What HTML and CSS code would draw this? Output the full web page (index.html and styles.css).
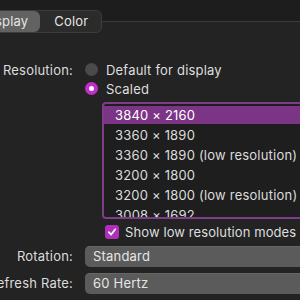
FILE: index.html
```html
<!DOCTYPE html>
<html>
<head>
<meta charset="utf-8">
<link rel="stylesheet" href="styles.css">
</head>
<body>
<div class="window">
  <div class="topbar">
    <div class="segmented">
      <div class="seg seg-on">Display</div>
      <div class="seg">Color</div>
    </div>
  </div>
  <div class="content">
    <div class="form">
      <div class="label lbl-res">Resolution:</div>
      <div class="res">
        <div class="radio-row">
          <span class="radio"></span><span>Default for display</span>
        </div>
        <div class="radio-row">
          <span class="radio radio-on"></span><span>Scaled</span>
        </div>
        <div class="listbox">
          <div class="item item-sel">3840 × 2160</div>
          <div class="item">3360 × 1890</div>
          <div class="item">3360 × 1890 (low resolution)</div>
          <div class="item">3200 × 1800</div>
          <div class="item">3200 × 1800 (low resolution)</div>
          <div class="item">3008 × 1692</div>
          <div class="item">3008 × 1692 (low resolution)</div>
        </div>
        <div class="check-row">
          <span class="checkbox"><svg width="10" height="10" viewBox="0 0 10 10"><path d="M1.8 5.2 L4.1 7.6 L8.3 2.2" fill="none" stroke="#fff" stroke-width="1.7" stroke-linecap="round" stroke-linejoin="round"/></svg></span>
          <span class="check-label">Show low resolution modes</span>
        </div>
      </div>
      <div class="label lbl-pop">Rotation:</div>
      <div class="popup">Standard</div>
      <div class="label lbl-pop">Refresh Rate:</div>
      <div class="popup">60 Hertz</div>
    </div>
  </div>
</div>
</body>
</html>
```

FILE: styles.css
```css
html, body {
  margin: 0;
  padding: 0;
  background: #232323;
  overflow: hidden;
}
body {
  width: 300px;
  height: 300px;
  font-family: "Inter", "Noto Sans", sans-serif;
  font-size: 13px;
  letter-spacing: 0.2px;
  color: #dedede;
}
.window {
  width: 300px;
  height: 300px;
  overflow: hidden;
}
.topbar {
  height: 21px;
  background: #1d1d1d;
  border-bottom: 1px solid #3b3b3b;
  position: relative;
}
.segmented {
  position: absolute;
  left: -31px;
  top: 10px;
  height: 21px;
  display: flex;
  background: #2b2b2b;
  border: 1px solid #3c3c3c;
  border-radius: 6px;
}
.seg {
  height: 21px;
  line-height: 21px;
  border-radius: 6px;
  color: #e4e4e4;
}
.seg-on {
  background: #626262;
  padding: 0 12px 0 12px;
}
.seg:last-child {
  padding: 0 13px 0 14px;
}
.content {
  padding-top: 38px;
}
.form {
  display: grid;
  grid-template-columns: 120px 1fr;
  column-gap: 12px;
  margin-left: -47px;
  row-gap: 6px;
  width: 700px;
}
.label {
  text-align: right;
  color: #dcdcdc;
  white-space: nowrap;
}
.lbl-res {
  line-height: 19px;
  margin-top: 1px;
}
.lbl-pop {
  line-height: 21px;
}
.res {
  display: flex;
  flex-direction: column;
}
.radio-row {
  display: flex;
  align-items: center;
  gap: 8px;
  height: 19px;
  white-space: nowrap;
}
.radio {
  width: 13px;
  height: 13px;
  border-radius: 50%;
  background: #4a4a4a;
  position: relative;
  flex: none;
}
.radio-on {
  background: #c02fca;
}
.radio-on::after {
  content: "";
  position: absolute;
  left: 4px;
  top: 4px;
  width: 5px;
  height: 5px;
  border-radius: 50%;
  background: #fff;
}
.listbox {
  margin-top: 4px;
  margin-left: 17px;
  height: 111px;
  overflow: hidden;
  border: 2px solid #7e3d88;
  border-radius: 4px;
  background: #1e1e1e;
  padding: 2px 0 0 0;
}
.item {
  height: 20px;
  line-height: 19px;
  padding-left: 11px;
  white-space: nowrap;
  color: #dcdcdc;
}
.item-sel {
  background: #7b3486;
  color: #fff;
  height: 18px;
  line-height: 18px;
  margin-bottom: 2px;
}
.check-row {
  display: flex;
  align-items: center;
  gap: 6px;
  margin-top: 5px;
  margin-left: 20px;
  height: 16px;
  white-space: nowrap;
}
.check-label {
  letter-spacing: 0.1px;
}
.checkbox {
  width: 14px;
  height: 14px;
  border-radius: 3px;
  background: #ad2fba;
  display: flex;
  align-items: center;
  justify-content: center;
  flex: none;
}
.popup {
  height: 21px;
  line-height: 21px;
  background: #5b5b5b;
  border-radius: 5px;
  padding-left: 8px;
  color: #e6e6e6;
  box-shadow: inset 0 1px 0 #666;
}
```
